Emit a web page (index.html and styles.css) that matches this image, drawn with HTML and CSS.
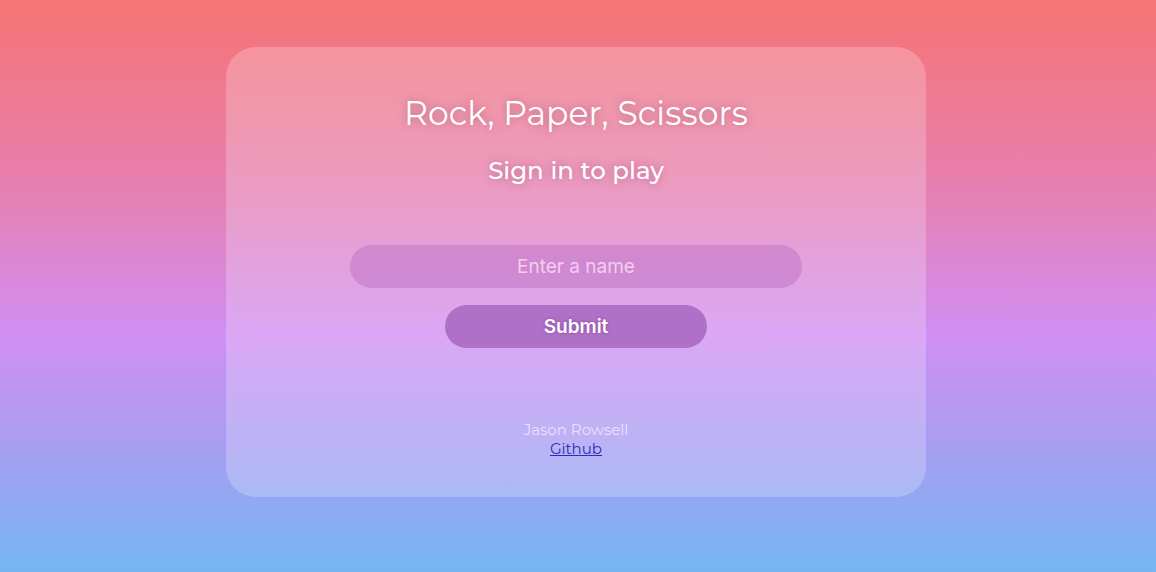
FILE: index.html
```html
<!DOCTYPE html>
<html lang="en">
<head>
<meta charset="utf-8">
<title>Rock, Paper, Scissors</title>
<link rel="stylesheet" href="styles.css">
</head>
<body>
<main class="page">
  <section class="card">
    <h1 class="title">Rock, Paper, Scissors</h1>
    <h2 class="subtitle">Sign in to play</h2>
    <form class="signin">
      <input class="name-input" type="text" placeholder="Enter a name">
      <button class="submit" type="button">Submit</button>
    </form>
    <footer class="credits">
      <div class="author">Jason Rowsell</div>
      <a class="github" href="#">Github</a>
    </footer>
  </section>
</main>
</body>
</html>
```
FILE: styles.css
```css
html, body {
  margin: 0;
  padding: 0;
  height: 100%;
}
body {
  background: linear-gradient(to bottom,
    rgb(246,116,116) 0%,
    rgb(232,126,170) 30%,
    rgb(210,142,242) 58%,
    rgb(168,158,242) 78%,
    rgb(116,182,242) 100%);
  font-family: "Montserrat", "Lato", "Noto Sans", sans-serif;
  overflow: hidden;
}
.page {
  display: flex;
  justify-content: center;
  padding-top: 47px;
  padding-right: 4px;
}
.card {
  width: 700px;
  height: 450px;
  box-sizing: border-box;
  border-radius: 30px;
  background: rgba(255,255,255,0.22);
  display: flex;
  flex-direction: column;
  align-items: center;
  padding-top: 44px;
}
.title {
  margin: 0;
  font-weight: 400;
  font-size: 33px;
  line-height: 44px;
  color: #fff;
  letter-spacing: 0.1px;
  text-shadow: 0 0 8px rgba(140,60,100,0.55);
}
.subtitle {
  margin: 18px 0 0;
  font-weight: 500;
  font-size: 24.5px;
  line-height: 34px;
  color: #fff;
  text-shadow: 0 0 8px rgba(140,60,100,0.5);
}
.signin {
  margin-top: 58px;
  display: flex;
  flex-direction: column;
  align-items: center;
  gap: 17px;
}
.name-input {
  width: 452px;
  height: 43px;
  box-sizing: border-box;
  border: none;
  border-radius: 22px;
  background: rgba(180,100,190,0.4);
  text-align: center;
  font-family: "Inter", "Liberation Sans", sans-serif;
  font-size: 19px;
  color: #fff;
  outline: none;
}
.name-input::placeholder {
  color: rgba(250,215,245,0.9);
}
.submit {
  width: 262px;
  height: 43px;
  border: none;
  border-radius: 22px;
  background: rgb(176,112,200);
  color: #fff;
  font-family: "Inter", "Liberation Sans", sans-serif;
  font-weight: 600;
  font-size: 19px;
  text-shadow: 0 0 3px rgba(90,30,110,0.5);
  cursor: pointer;
}
.credits {
  margin-top: 72px;
  display: flex;
  flex-direction: column;
  align-items: center;
  font-size: 15px;
  line-height: 19px;
}
.author {
  color: rgba(245,235,255,0.85);
}
.github {
  color: #2e2ab8;
  text-decoration: underline;
}
```
